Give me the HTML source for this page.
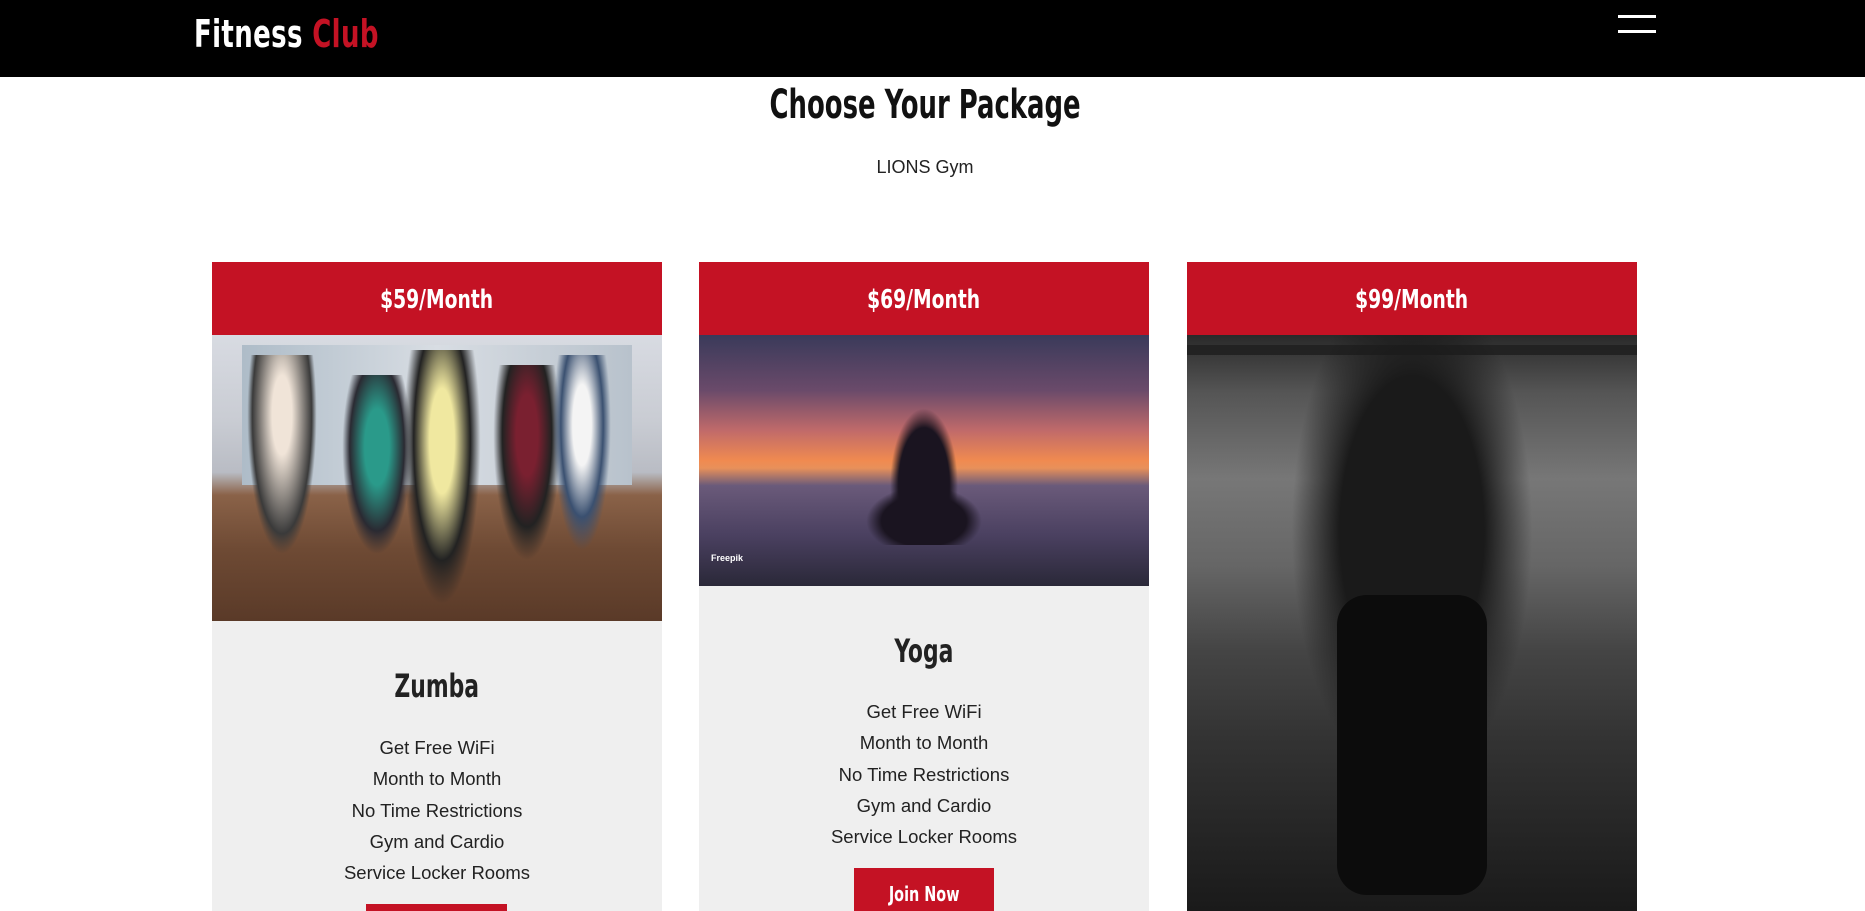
<!DOCTYPE html>
<html><head><meta charset="utf-8"><style>
*{margin:0;padding:0;box-sizing:border-box}
html,body{width:1865px;height:911px;overflow:hidden}
body{background:#fff;font-family:"Liberation Sans",sans-serif;position:relative}
.cond{font-family:"DejaVu Sans Condensed","Liberation Sans",sans-serif;font-weight:bold}
.sq{display:inline-block;transform:scaleX(.76);transform-origin:center}
header{position:absolute;left:0;top:0;width:1865px;height:77px;background:#000}
.logo{position:absolute;left:194px;top:12px;font-size:38px;color:#fff;letter-spacing:0.5px}
.logo .sq{transform-origin:left}
.logo span span{color:#c41224}
.ham{position:absolute;left:1618px;width:38px;height:3px;background:#fff}
h1{position:absolute;top:82px;left:0;width:1850px;text-align:center;font-size:40px;color:#111}
.sub{position:absolute;top:157px;left:0;width:1850px;text-align:center;font-size:18px;color:#222}
.card{position:absolute;top:262px;width:450px;height:649px;background:#efefef;overflow:hidden}
.price{height:73px;background:#c41224;color:#fff;text-align:center;font-size:26px;line-height:76px}
.img{width:450px}
.t{position:absolute;left:0;width:450px;text-align:center;font-size:32px;color:#222}
.list{position:absolute;left:0;width:450px;text-align:center;font-size:18.5px;color:#222;line-height:31.3px}
.btn{position:absolute;height:60px;background:#c41224;color:#fff;text-align:center;font-size:20px;line-height:52px}
</style></head><body>
<header>
<div class="logo cond"><span class="sq">Fitness <span>Club</span></span></div>
<div class="ham" style="top:15px"></div><div class="ham" style="top:30px"></div>
</header>
<h1 class="cond"><span class="sq" style="transform:scaleX(.72)">Choose Your Package</span></h1>
<div class="sub">LIONS Gym</div>

<div class="card" style="left:212px">
<div class="price cond"><span class="sq" style="transform:scaleX(.8)">$59/Month</span></div>
<div class="img" style="height:286px;background:linear-gradient(180deg,#d8dbe2 0%,#c9ccd3 30%,#b9bcc4 48%,#8a6248 56%,#6e4a34 75%,#5a3a28 100%);position:relative;overflow:hidden">
<div style="position:absolute;left:30px;top:10px;width:390px;height:140px;background:linear-gradient(90deg,#aebcc8,#d8dde3,#b8c2cc)"></div>
<div style="position:absolute;left:35px;top:20px;width:70px;height:200px;background:radial-gradient(ellipse at 50% 30%,#f0e4d8 20%,#3a3a3a 60%,transparent 70%)"></div>
<div style="position:absolute;left:130px;top:40px;width:70px;height:180px;background:radial-gradient(ellipse at 50% 40%,#2a9a8a 25%,#2a2a32 55%,transparent 70%)"></div>
<div style="position:absolute;left:190px;top:15px;width:80px;height:260px;background:radial-gradient(ellipse at 50% 35%,#f0e8a0 22%,#222 50%,transparent 68%)"></div>
<div style="position:absolute;left:280px;top:30px;width:70px;height:200px;background:radial-gradient(ellipse at 50% 35%,#7a2030 22%,#222 50%,transparent 68%)"></div>
<div style="position:absolute;left:340px;top:20px;width:60px;height:200px;background:radial-gradient(ellipse at 50% 35%,#f4f4f4 22%,#3a5070 50%,transparent 68%)"></div>
</div>
<div class="t cond" style="top:405px"><span class="sq">Zumba</span></div>
<div class="list" style="top:470px">Get Free WiFi<br>Month to Month<br>No Time Restrictions<br>Gym and Cardio<br>Service Locker Rooms</div>
<div class="btn cond" style="left:154px;top:642px;width:141px"></div>
</div>

<div class="card" style="left:699px">
<div class="price cond"><span class="sq" style="transform:scaleX(.8)">$69/Month</span></div>
<div class="img" style="height:251px;background:linear-gradient(180deg,#3a3a5a 0%,#6a4a6a 22%,#c06a6a 38%,#f08a50 50%,#e8905a 53%,#6a5a7a 60%,#4a4060 80%,#2a2838 100%);position:relative;overflow:hidden">
<div style="position:absolute;left:185px;top:60px;width:80px;height:150px;background:radial-gradient(ellipse at 50% 60%,#1a1420 45%,transparent 60%)"></div>
<div style="position:absolute;left:165px;top:150px;width:120px;height:60px;background:radial-gradient(ellipse at 50% 60%,#1a1420 50%,transparent 68%)"></div>
<div style="position:absolute;left:12px;top:218px;color:#fff;font-size:9px;font-weight:bold">Freepik</div>
</div>
<div class="t cond" style="top:370px"><span class="sq">Yoga</span></div>
<div class="list" style="top:434px">Get Free WiFi<br>Month to Month<br>No Time Restrictions<br>Gym and Cardio<br>Service Locker Rooms</div>
<div class="btn cond" style="left:155px;top:606px;width:140px"><span class="sq" style="transform:scaleX(.8)">Join Now</span></div>
</div>

<div class="card" style="left:1187px;background:#111">
<div class="price cond"><span class="sq" style="transform:scaleX(.8)">$99/Month</span></div>
<div class="img" style="height:576px;background:linear-gradient(180deg,#2a2a2a 0%,#555 10%,#777 25%,#666 40%,#444 55%,#333 70%,#1a1a1a 100%);position:relative;overflow:hidden">
<div style="position:absolute;left:0;top:10px;width:450px;height:10px;background:#222"></div>
<div style="position:absolute;left:55px;top:0;width:340px;height:560px;background:radial-gradient(ellipse at 50% 35%,#1a1a1a 30%,transparent 50%)"></div>
<div style="position:absolute;left:150px;top:260px;width:150px;height:300px;background:#0c0c0c;border-radius:30px"></div>
</div>
</div>
</body></html>
